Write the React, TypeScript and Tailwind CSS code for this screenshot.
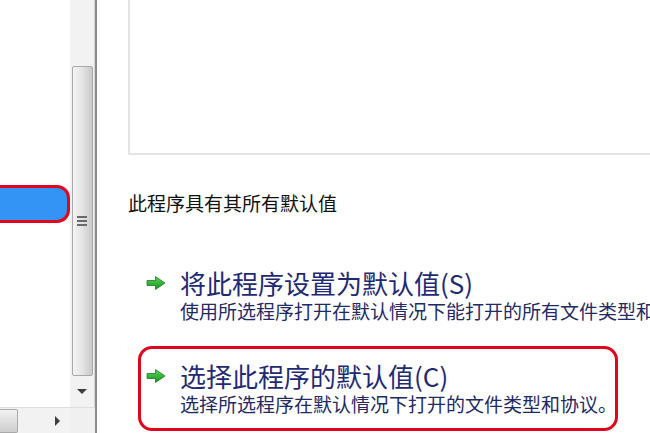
import React from 'react';

const font = { fontFamily: '"Noto Sans CJK SC", "Noto Sans", sans-serif' };

function GreenArrow() {
    return (
        <svg width="22" height="16" viewBox="0 0 22 16" className="shrink-0">
            <defs>
                <linearGradient id="ga" x1="0" y1="0" x2="0" y2="1">
                    <stop offset="0" stopColor="#5fd35f" />
                    <stop offset="1" stopColor="#14951a" />
                </linearGradient>
            </defs>
            <path d="M2 5.5 H10.5 V1.5 L20 8 L10.5 14.5 V10.5 H2 Z" fill="url(#ga)" stroke="#1c7d1f" strokeWidth="0.8" strokeLinejoin="round" />
        </svg>
    );
}

function CommandLink({ title, desc, marked }: { title: string; desc: string; marked?: boolean }) {
    return (
        <div
            className={
                'ml-[10px] w-[480px] h-[85px] rounded-[14px] border-[3px] pl-[4px] pt-[13px] ' +
                (marked ? 'border-[#e0061e]' : 'border-transparent')
            }
        >
            <div className="flex items-center h-[28px]">
                <GreenArrow />
                <span className="ml-[13px] text-[26px] leading-[28px] text-[#1f2a76] whitespace-nowrap">{title}</span>
            </div>
            <div className="pl-[35px] text-[19px] leading-[24px] mt-[2px] text-[#1f2a66] whitespace-nowrap">{desc}</div>
        </div>
    );
}

export default function App() {
    return (
        <div className="w-[650px] h-[433px] flex overflow-hidden bg-white" style={font}>
            {/* left list with scrollbars */}
            <div className="w-[95px] h-full flex flex-col shrink-0">
                <div className="flex flex-1">
                    <div className="w-[70px] bg-white">
                        <div className="mt-[185px] h-[38px] w-[70px] bg-[#3394f6] border-[3px] border-l-0 border-[#e0061e] rounded-r-[13px]" />
                    </div>
                    {/* vertical scrollbar */}
                    <div className="w-[25px] bg-[#f2f2f2] flex flex-col items-center border-r border-[#d6d6d6]">
                        <div className="h-[66px]" />
                        <div className="w-[21px] h-[310px] rounded-[2px] border border-[#a9a9a9] bg-gradient-to-r from-[#f4f4f4] via-[#e4e4e4] to-[#c9c9c9] flex flex-col items-center justify-center gap-[2px]">
                            <div className="w-[10px] h-[2px] bg-[#6a6a6a]" />
                            <div className="w-[10px] h-[2px] bg-[#6a6a6a]" />
                            <div className="w-[10px] h-[2px] bg-[#6a6a6a]" />
                        </div>
                        <div className="flex-1 flex items-center justify-center">
                            <div className="w-0 h-0 border-l-[5px] border-r-[5px] border-t-[5px] border-l-transparent border-r-transparent border-t-[#3d3d3d]" />
                        </div>
                    </div>
                </div>
                {/* horizontal scrollbar */}
                <div className="h-[26px] flex bg-[#f2f2f2] border-t border-[#dedede]">
                    <div className="w-[18px] h-[24px] mt-[1px] rounded-r-[2px] border border-l-0 border-[#a9a9a9] bg-gradient-to-b from-[#f2f2f2] to-[#cdcdcd]" />
                    <div className="w-[52px] flex items-center justify-end pr-[10px]">
                        <div className="w-0 h-0 border-t-[5px] border-b-[5px] border-l-[5px] border-t-transparent border-b-transparent border-l-[#3d3d3d]" />
                    </div>
                    <div className="flex-1 bg-[#f0f0f0]" />
                </div>
            </div>
            <div className="w-[2px] h-full bg-[#8c8c8c] shrink-0" />

            {/* right pane */}
            <div className="flex-1 min-w-0 overflow-hidden flex flex-col pl-[31px]">
                <div className="h-[155px] border-l-2 border-b-2 border-[#e3e4e8] bg-white shrink-0" />
                <div className="mt-[36px] text-[19px] leading-[24px] text-[#111] whitespace-nowrap">此程序具有其所有默认值</div>
                <div className="mt-[38px] flex flex-col gap-[8px]">
                    <CommandLink
                        title="将此程序设置为默认值(S)"
                        desc="使用所选程序打开在默认情况下能打开的所有文件类型和"
                    />
                    <CommandLink
                        title="选择此程序的默认值(C)"
                        desc="选择所选程序在默认情况下打开的文件类型和协议。"
                        marked
                    />
                </div>
            </div>
        </div>
    );
}
